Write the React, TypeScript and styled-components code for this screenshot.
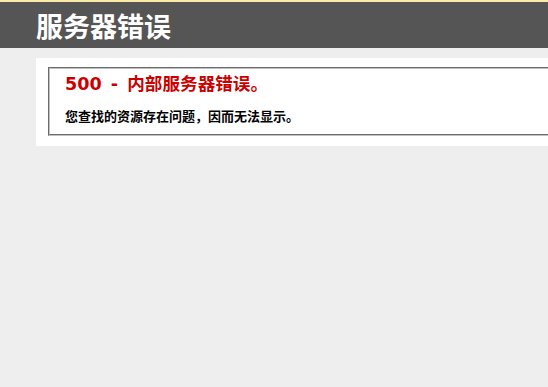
import styled, { createGlobalStyle } from 'styled-components'

const GlobalStyle = createGlobalStyle`
  html, body { margin:0; padding:0; background:#eeeeee; }
  body { font-family: "DejaVu Sans", Verdana, "Noto Sans CJK SC", sans-serif; }
`

export default function App() {
  return (
    <>
      <GlobalStyle />
      <Header>
        <Title>服务器错误</Title>
      </Header>
      <Content>
        <Container>
          <Fieldset>
            <Code>500 - 内部服务器错误。</Code>
            <Message>您查找的资源存在问题，因而无法显示。</Message>
          </Fieldset>
        </Container>
      </Content>
    </>
  )
}

const Header = styled.div`
  height:46px;
  border-top:2px solid #fbe9a6;
  background:#555555;
  padding:0 0 0 36px;
  display:flex;
  align-items:center;
`
const Title = styled.h1`
  margin:2px 0 0;
  font-size:27px;
  line-height:30px;
  font-weight:bold;
  color:#fff;
  font-family:"Noto Sans CJK SC", sans-serif;
`
const Content = styled.div`
  margin:10px 0 0 36px;
`
// box runs off the right edge, clipped like the original
const Container = styled.div`
  background:#fff;
  padding:9px 0 10px 12px;
  overflow:hidden;
`
const Fieldset = styled.fieldset`
  margin:0 -20px 0 0;
  padding:0 15px 10px 15px;
  border:2px groove #c0c0c0;
  min-width:0;
`
const Code = styled.h2`
  margin:3px 0 0;
  font-size:17.6px;
  line-height:24px;
  font-weight:bold;
  word-spacing:3px;
  color:#cc0000;
  font-family:"DejaVu Sans", Verdana, "Noto Sans CJK SC", sans-serif;
`
const Message = styled.h3`
  margin:12px 0 0;
  font-size:13px;
  line-height:16px;
  font-weight:bold;
  color:#000;
  font-family:"Noto Sans CJK SC", sans-serif;
`
